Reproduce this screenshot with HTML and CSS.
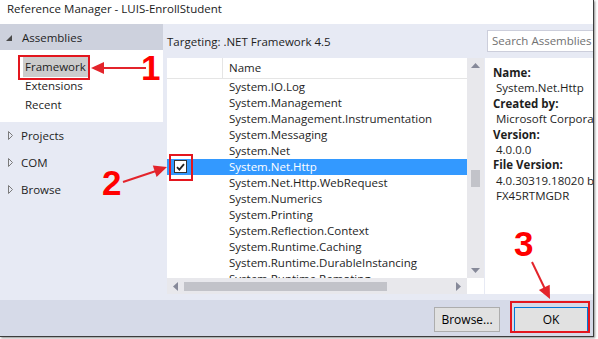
FILE: index.html
```html
<!DOCTYPE html>
<html>
<head>
    <title>Reference Manager</title>
    <meta charset="UTF-8">
    <link rel="stylesheet" href="styles.css">
</head>
<body>
    <div class="window">
        <div class="titlebar">Reference Manager - LUIS-EnrollStudent</div>

        <div class="main">
            <aside class="nav">
                <div class="nav-head"><span class="tri-open"></span>Assemblies</div>
                <div class="nav-sub">
                    <div class="sub-item"><span class="selected">Framework</span></div>
                    <div class="sub-item"><span>Extensions</span></div>
                    <div class="sub-item"><span>Recent</span></div>
                </div>
                <div class="nav-item">
                    <svg class="tri-closed" width="5" height="9" viewBox="0 0 5 9"><polygon points="0.5,0.5 4.5,4.5 0.5,8.5" /></svg>Projects
                </div>
                <div class="nav-item">
                    <svg class="tri-closed" width="5" height="9" viewBox="0 0 5 9"><polygon points="0.5,0.5 4.5,4.5 0.5,8.5" /></svg>COM
                </div>
                <div class="nav-item">
                    <svg class="tri-closed" width="5" height="9" viewBox="0 0 5 9"><polygon points="0.5,0.5 4.5,4.5 0.5,8.5" /></svg>Browse
                </div>
            </aside>

            <section class="content">
                <div class="toolbar">
                    <span>Targeting: .NET Framework 4.5</span>
                    <div class="search">Search Assemblies (Ctrl+E)</div>
                </div>

                <div class="panes">
                    <div class="list">
                        <div class="list-body">
                            <div class="list-head">
                                <div class="col-check"></div>
                                <div class="col-name">Name</div>
                            </div>
                            <div class="rows" id="rows"></div>
                        </div>
                        <div class="vscroll">
                            <svg width="9" height="5" viewBox="0 0 9 5"><polygon points="0,5 4.5,0 9,5" /></svg>
                            <div class="vtrack"><div class="vthumb"></div></div>
                            <svg width="9" height="5" viewBox="0 0 9 5"><polygon points="0,0 9,0 4.5,5" /></svg>
                        </div>
                        <div class="hscroll">
                            <svg width="5" height="9" viewBox="0 0 5 9"><polygon points="5,0 5,9 0,4.5" /></svg>
                            <div class="htrack"><div class="hthumb"></div></div>
                            <svg width="5" height="9" viewBox="0 0 5 9"><polygon points="0,0 5,4.5 0,9" /></svg>
                        </div>
                        <div class="corner"></div>
                    </div>

                    <div class="details">
                        <div class="label">Name:</div>
                        <div class="value">System.Net.Http</div>
                        <div class="label">Created by:</div>
                        <div class="value">Microsoft Corporation</div>
                        <div class="label">Version:</div>
                        <div class="value">4.0.0.0</div>
                        <div class="label">File Version:</div>
                        <div class="value">4.0.30319.18020 built by:</div>
                        <div class="value">FX45RTMGDR</div>
                    </div>
                </div>
            </section>
        </div>

        <div class="footer">
            <button class="btn">Browse...</button>
            <button class="btn btn-ok">OK</button>
        </div>
    </div>

    <!-- annotations drawn over the dialog -->
    <svg class="annot" width="598" height="339" viewBox="0 0 598 339">
        <rect x="19" y="56" width="70" height="23" />
        <line x1="146" y1="68" x2="102" y2="68" />
        <polygon points="91,68 104,62 104,74" />
        <text x="141" y="80">1</text>

        <rect x="170" y="155" width="22" height="25" />
        <line x1="123" y1="182" x2="156" y2="171" />
        <polygon points="167,167 156.6,176.9 152.8,165.5" />
        <text x="102" y="195">2</text>

        <rect x="511" y="302" width="78" height="30" />
        <line x1="532" y1="262" x2="545" y2="289" />
        <polygon points="550,299 549.7,284.7 538.9,289.9" />
        <text x="514" y="256">3</text>
    </svg>

    <script>
        const names = [
            'System.IO.Log',
            'System.Management',
            'System.Management.Instrumentation',
            'System.Messaging',
            'System.Net',
            'System.Net.Http',
            'System.Net.Http.WebRequest',
            'System.Numerics',
            'System.Printing',
            'System.Reflection.Context',
            'System.Runtime.Caching',
            'System.Runtime.DurableInstancing',
            'System.Runtime.Remoting'
        ];
        const rows = document.getElementById('rows');
        names.forEach(name => {
            const row = document.createElement('div');
            row.className = 'row';
            const check = document.createElement('div');
            check.className = 'col-check';
            const cell = document.createElement('div');
            cell.className = 'col-name';
            cell.textContent = name;
            if (name === 'System.Net.Http') {
                row.classList.add('active');
                check.innerHTML = '<span class="checkbox"><svg width="9" height="8" viewBox="0 0 9 8"><path d="M1 4.2 L3.4 6.6 L8 1.2" /></svg></span>';
            }
            row.appendChild(check);
            row.appendChild(cell);
            rows.appendChild(row);
        });
    </script>
</body>
</html>
```

FILE: styles.css
```css
body {
    margin: 0;
    background: #fff;
    font-family: 'Open Sans', 'Noto Sans', sans-serif;
    font-size: 11.5px;
    color: #1e1e1e;
    width: 598px;
    height: 339px;
    position: relative;
    overflow: hidden;
}
.window {
    width: 593px;
    height: 336px;
    border-right: 1px solid #3c3c3c;
    border-bottom: 1px solid #3c3c3c;
    box-shadow: 1px 1px 2px rgba(0,0,0,0.45);
    display: flex;
    flex-direction: column;
    overflow: hidden;
}
.titlebar {
    height: 24px;
    line-height: 17px;
    padding-left: 7px;
    background: #fff;
    color: #1a1a1a;
    flex-shrink: 0;
}
.main {
    height: 276px;
    display: flex;
    background: #e7eaf4;
    flex-shrink: 0;
}

/* left navigation */
.nav {
    width: 163px;
    flex-shrink: 0;
}
.nav-head {
    height: 26px;
    background: #cdd1dd;
    display: flex;
    align-items: center;
    padding-left: 6px;
}
.tri-open {
    width: 0;
    height: 0;
    border-left: 6px solid transparent;
    border-bottom: 6px solid #4a4a4a;
    margin-right: 10px;
    margin-top: 1px;
}
.nav-sub {
    background: #fff;
    padding: 7px 0 8px 0;
}
.sub-item {
    height: 19px;
    line-height: 19px;
    padding-left: 23px;
}
.sub-item span {
    display: inline-block;
    padding: 0 3px 0 2px;
}
.sub-item .selected {
    background: #cccccc;
    height: 20px;
}
.nav-item {
    height: 27px;
    display: flex;
    align-items: center;
    padding-left: 8px;
}
.tri-closed {
    margin-right: 8px;
}
.tri-closed polygon {
    fill: none;
    stroke: #7a7a7a;
    stroke-width: 1;
}

/* right side */
.content {
    flex: 1;
    display: flex;
    flex-direction: column;
    min-width: 0;
}
.toolbar {
    height: 34px;
    display: flex;
    align-items: center;
    padding-left: 4px;
    flex-shrink: 0;
}
.search {
    margin-left: auto;
    margin-right: -40px;
    width: 140px;
    height: 20px;
    line-height: 20px;
    background: #fff;
    border: 1px solid #cccedb;
    padding-left: 4px;
    color: #717171;
    white-space: nowrap;
    overflow: hidden;
    flex-shrink: 0;
}
.panes {
    flex: 1;
    min-height: 0;
    display: flex;
    padding: 0 0 6px 4px;
}
.list {
    width: 317px;
    display: grid;
    grid-template-columns: 300px 17px;
    grid-template-rows: minmax(0, 1fr) 16px;
    flex-shrink: 0;
}
.list-body {
    background: #fff;
    overflow: hidden;
    min-height: 0;
}
.list-head {
    height: 20px;
    display: flex;
    border-bottom: 1px solid #e5e5e5;
    line-height: 20px;
}
.list-head .col-check {
    border-right: 1px solid #e5e5e5;
    width: 55px;
}
.col-check {
    width: 56px;
    flex-shrink: 0;
}
.col-name {
    padding-left: 6px;
    white-space: nowrap;
}
.row {
    height: 16px;
    line-height: 16px;
    display: flex;
}
.row.active {
    background: #3399ff;
    color: #fff;
}
.checkbox {
    display: flex;
    align-items: center;
    justify-content: center;
    width: 11px;
    height: 11px;
    margin: 1px 0 0 7px;
    background: #fff;
    border: 1px solid #333;
}
.checkbox path {
    fill: none;
    stroke: #222;
    stroke-width: 1.8;
}
.vscroll {
    background: #e8e8ec;
    display: flex;
    flex-direction: column;
    align-items: center;
    padding: 5px 0;
    min-height: 0;
}
.vscroll polygon,
.hscroll polygon {
    fill: #868999;
}
.vtrack {
    flex: 1;
    width: 9px;
    padding-top: 102px;
}
.vthumb {
    width: 9px;
    height: 17px;
    background: #c2c3c9;
}
.hscroll {
    background: #e8e8ec;
    display: flex;
    align-items: center;
    padding: 0 6px;
}
.htrack {
    flex: 1;
    height: 9px;
    padding: 0 6px;
}
.hthumb {
    width: 203px;
    height: 9px;
    background: #c2c3c9;
}
.corner {
    background: #fff;
}
.details {
    flex: 1;
    margin-left: 1px;
    background: #fff;
    padding: 7px 0 0 8px;
    line-height: 15.4px;
    white-space: nowrap;
    overflow: hidden;
}
.label {
    font-weight: bold;
}
.value {
    padding-left: 3px;
}

/* footer */
.footer {
    flex: 1;
    background: #d6dae8;
    display: flex;
    justify-content: flex-end;
    align-items: center;
    padding-right: 5px;
    gap: 14px;
}
.btn {
    height: 25px;
    font-family: inherit;
    font-size: 12px;
    background: #e1e1e1;
    border: 1px solid #adadad;
    color: #000;
    padding: 0;
    margin-top: 2px;
}
.btn:first-child {
    width: 66px;
}
.btn-ok {
    width: 74px;
    border-color: #0078d7;
}

/* annotation overlay */
.annot {
    position: absolute;
    left: 0;
    top: 0;
    pointer-events: none;
}
.annot rect {
    fill: none;
    stroke: #e3161e;
    stroke-width: 2;
}
.annot line {
    stroke: #e3242b;
    stroke-width: 2;
}
.annot polygon {
    fill: #e3242b;
}
.annot text {
    font-family: 'Liberation Sans', sans-serif;
    font-weight: 900;
    font-size: 35px;
    fill: #ff0000;
}
```
